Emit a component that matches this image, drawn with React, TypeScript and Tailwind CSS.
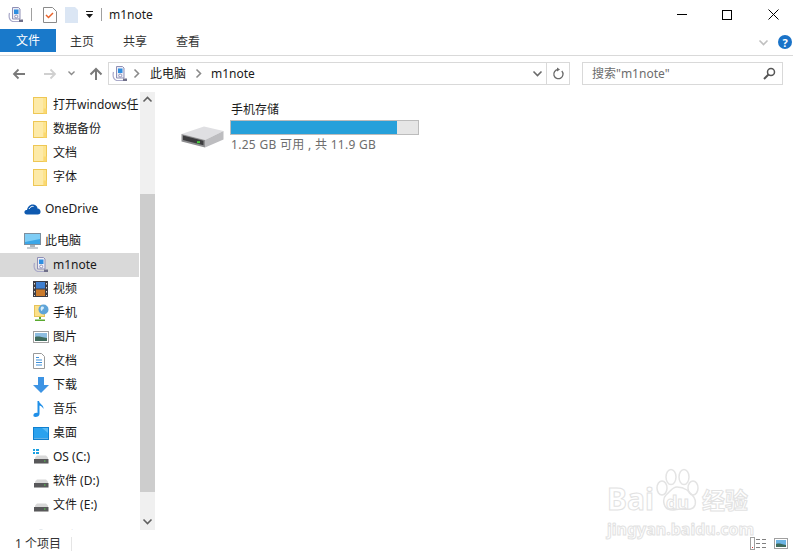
import { ReactNode } from 'react';

const FONT = "font-['Noto_Sans','Noto_Sans_CJK_SC',sans-serif]";

function PhoneIcon({ size = 16 }: { size?: number }) {
  return (
    <svg width={size} height={size} viewBox="0 0 16 16" className="shrink-0">
      <path d="M1.500 6c-1 4 0 7 3 8.500h7" fill="none" stroke="#a9a9c9" strokeWidth="1.200" />
      <path d="M4.500.5h6l1.500 1.500v10H4.500z" fill="#ecedf6" stroke="#8f8fb5" />
      <rect x="6" y="2.500" width="4.500" height="4.500" fill="#2f8ee0" />
      <circle cx="8.200" cy="9.500" r="1.500" fill="#fff" stroke="#8f8fb5" />
      <path d="M11 12.500h4v2.500h-4z" fill="#6f6f88" />
    </svg>
  );
}

function FolderIcon() {
  return (
    <svg width="14" height="17" viewBox="0 0 14 17" className="shrink-0">
      <rect x="0.500" y="0.500" width="13" height="16" fill="#fde48e" stroke="#eec755" />
      <path d="M1 1h9v15H1z" fill="#fdeaa8" />
      <path d="M10.500 11.500h3v5h-3z" fill="#fbd870" />
    </svg>
  );
}

function CloudIcon() {
  return (
    <svg width="17" height="12" viewBox="0 0 17 12" className="shrink-0">
      <path d="M3 11.500C1 11.500 0 10 .5 8.500 1 7.400 2 7 3 7c.5-3 3-6 6.500-5.500C12 2 13.500 3.500 13.500 5.500c2 0 3.500 2 3 4-.3 1.300-1.300 2-2.500 2z" fill="#0f5ab0" />
      <path d="M5 6c1-2 3-3 4.500-2.500" stroke="#fff" fill="none" />
    </svg>
  );
}

function MonitorIcon() {
  return (
    <svg width="17" height="16" viewBox="0 0 17 16" className="shrink-0">
      <rect x="0.500" y="0.500" width="16" height="11" fill="#3aa6e8" stroke="#7d8f9e" />
      <path d="M1 1h15v5L1 9z" fill="#7fcdf5" />
      <path d="M6 12h5v2H6z" fill="#aab5bd" />
      <path d="M3 14.500h11v1H3z" fill="#8d99a3" />
    </svg>
  );
}

function VideoIcon() {
  return (
    <svg width="15" height="16" viewBox="0 0 15 16" className="shrink-0">
      <rect width="15" height="16" fill="#3c3c44" />
      <rect x="3" y="1" width="9" height="6.500" fill="#3f7fd0" />
      <rect x="3" y="8.500" width="9" height="6.500" fill="#c97a2c" />
      <path d="M1 2h1v1.500H1zM1 6h1v1.500H1zM1 10h1v1.500H1zM1 14h1v1H1zM13 2h1v1.500h-1zM13 6h1v1.500h-1zM13 10h1v1.500h-1zM13 14h1v1h-1z" fill="#ddd" />
    </svg>
  );
}

function GlobeIcon() {
  return (
    <svg width="16" height="18" viewBox="0 0 16 18" className="shrink-0">
      <rect x="1.500" y="1.500" width="10" height="11" fill="#fbe08a" stroke="#e6c35a" />
      <circle cx="10.500" cy="5.500" r="5" fill="#5fa4d8" />
      <path d="M8 3c2-1 3 0 3 1s-2 1-2 3c-1 0-2-2-1-4z" fill="#d6eefc" />
      <path d="M6 13h2v2H6zM2 15.500h10V17H2z" fill="#5aa92f" />
    </svg>
  );
}

function PictureIcon() {
  return (
    <svg width="16" height="12" viewBox="0 0 16 12" className="shrink-0">
      <rect x="0.500" y="0.500" width="15" height="11" fill="#fff" stroke="#a0a0a0" />
      <rect x="2" y="2" width="12" height="8" fill="#8dbde0" />
      <path d="M2 6c3-1 6 0 12 1v3H2z" fill="#3f6b5c" />
    </svg>
  );
}

function DocIcon() {
  return (
    <svg width="12" height="16" viewBox="0 0 12 16" className="shrink-0">
      <path d="M.5.500h8l3 3v12H.500z" fill="#fff" stroke="#9a9a9a" />
      <path d="M3 4h3v1H3zM3 6.500h6v1H3zM3 9h6v1H3zM3 11.500h6v1H3z" fill="#3f8fd8" />
    </svg>
  );
}

function DownIcon() {
  return (
    <svg width="16" height="16" viewBox="0 0 16 16" className="shrink-0">
      <path d="M5 0h6v8h5l-8 8-8-8h5z" fill="#3d94e4" />
    </svg>
  );
}

function MusicIcon() {
  return (
    <svg width="12" height="16" viewBox="0 0 12 16" className="shrink-0">
      <path d="M4.500 0h1.500c.3 3 5 4 4.500 8-.5-1.500-2-3-4-3.500V13c0 2-2 3-4 3-1.500 0-2.500-1-2-2.300.5-1.500 2.500-2.200 4-1.700z" fill="#1f8fe8" />
    </svg>
  );
}

function DesktopIcon() {
  return (
    <svg width="16" height="13" viewBox="0 0 16 13" className="shrink-0">
      <rect width="16" height="13" fill="#0f7fd0" />
      <rect x="1" y="1" width="14" height="10" fill="#2ba2ee" />
      <path d="M9 1h6v5z" fill="#5cbcf5" />
      <path d="M1 11.500h14v.5H1z" fill="#bfe6fa" />
    </svg>
  );
}

function NetworkIcon() {
  return (
    <svg width="16" height="16" viewBox="0 0 16 16" className="shrink-0">
      <circle cx="8" cy="7" r="6" fill="#8fc3e8" stroke="#b9c9d6" />
      <path d="M5 4c2-2 4-1 4 0s-2 2-3 2z" fill="#e3f2fb" />
    </svg>
  );
}

function DriveIcon({ win = false }: { win?: boolean }) {
  return (
    <svg width="16" height="16" viewBox="0 0 16 16" className="shrink-0">
      {win && <path d="M0 0h2v2H0zM3 0h3v2H3zM0 3h2v2H0zM3 3h3v2H3z" fill="#1ba1e2" />}
      <path d="M2 8.500 4 6.500h9l2 2V10H2z" fill="#d8d8d8" />
      <rect x="1" y="10" width="14.500" height="4" fill="#58585a" />
      <rect x="1" y="14" width="14.500" height="1" fill="#a8a8a8" />
      <rect x="11" y="11.500" width="1.500" height="1" fill="#56d24a" />
    </svg>
  );
}

function BigDrive() {
  return (
    <svg width="43" height="22" viewBox="0 0 43 22" className="shrink-0">
      <path d="M.5 8 23 .5 42.500 5 24 14z" fill="#dfdfe2" />
      <path d="M24 14 42.500 5v8.500L24 21.500z" fill="#bdbdc0" />
      <path d="M.5 8 24 14v7.500L.5 15.500z" fill="#8e8e90" />
      <path d="M2 9.500 22.500 14.700v4.500L2 14z" fill="#3c3c3e" />
      <rect x="16" y="15.200" width="3" height="2" fill="#47d13f" />
    </svg>
  );
}

function Chevron({ dir, color = '#7a7a7a' }: { dir: 'up' | 'down' | 'right'; color?: string }) {
  const d = dir === 'up' ? 'M1.500 6.500 5.500 2.500l4 4' : dir === 'down' ? 'M1.500 3.500l4 4 4-4' : 'M3.500 1.500l4 4-4 4';
  return (
    <svg width="11" height="11" viewBox="0 0 11 11" className="shrink-0">
      <path d={d} fill="none" stroke={color} strokeWidth="1.600" />
    </svg>
  );
}

function NavRow({ icon, label, active, top }: { icon: ReactNode; label: string; active?: boolean; top?: boolean }) {
  return (
    <div className={`flex h-6 items-center whitespace-nowrap ${active ? 'bg-[#d9d9d9]' : ''} ${top ? 'pl-6' : 'pl-[33px]'}`}>
      <span className={`flex items-center justify-start ${top ? 'w-[21px]' : 'w-5'}`}>{icon}</span>
      <span className="text-[12px] text-[#1a1a1a]">{label}</span>
    </div>
  );
}

function Watermark() {
  const stroke = 'text-white [-webkit-text-stroke:1px_#e2e2e2]';
  return (
    <div className={`pointer-events-none absolute left-[607px] top-[466px] w-[170px] ${FONT}`}>
      <svg width="44" height="46" viewBox="0 0 44 46" className="absolute left-[48px] top-[2px]" fill="none" stroke="#e4e4e4" strokeWidth="1.500">
        <ellipse cx="7" cy="20" rx="5" ry="7" />
        <ellipse cx="16" cy="9" rx="5" ry="7.500" />
        <ellipse cx="29" cy="9" rx="5" ry="7.500" />
        <ellipse cx="38" cy="20" rx="5" ry="7" />
        <path d="M22 19c-5 0-7 5-11 8-4 4-3 15 6 15 3 0 6-1 9-1 5 0 12 2 14-4 2-7-4-11-8-15-3-2-5-3-10-3z" />
      </svg>
      <div className="flex items-end pt-[18px] leading-none">
        <span className={`text-[30px] font-bold leading-[30px] ${stroke}`}>Bai</span>
        <span className={`ml-[12px] text-[18px] font-bold leading-[24px] ${stroke}`}>du</span>
        <span className={`ml-[13px] text-[23px] font-bold leading-[28px] ${stroke}`}>经验</span>
      </div>
      <div className={`mt-[6px] text-[16px] font-bold leading-[18px] whitespace-nowrap ${stroke}`}>jingyan.baidu.com</div>
    </div>
  );
}

export default function App() {
  return (
    <div className={`relative flex h-[554px] w-[793px] flex-col overflow-hidden bg-white ${FONT}`}>
      {/* title bar */}
      <div className="flex h-[29px] shrink-0 items-center pl-[8px]">
        <PhoneIcon />
        <span className="ml-[7px] h-[13px] w-px bg-[#a0a0a0]" />
        <svg width="14" height="16" viewBox="0 0 14 16" className="ml-[11px] shrink-0">
          <path d="M.5.500h9l4 4v11H.500z" fill="#fff" stroke="#8a8a8a" />
          <path d="M3 8l2.500 2.500L10 6" fill="none" stroke="#e8622a" strokeWidth="1.500" />
        </svg>
        <svg width="13" height="16" viewBox="0 0 13 16" className="ml-[8px] shrink-0">
          <path d="M0 0h10l3 3v13H0z" fill="#dbe6f4" />
        </svg>
        <svg width="9" height="8" viewBox="0 0 9 8" className="ml-[7px] shrink-0">
          <path d="M1 0h7v1H1zM1 3h7L4.500 7z" fill="#1a1a1a" />
        </svg>
        <span className="ml-[7px] h-[13px] w-px bg-[#a0a0a0]" />
        <span className="ml-[7px] text-[12px] text-[#1a1a1a]">m1note</span>
        <div className="ml-auto flex h-full">
          <div className="flex w-[38px] items-center justify-center">
            <span className="h-px w-[10px] bg-black" />
          </div>
          <div className="flex w-[52px] items-center justify-center">
            <span className="h-[10px] w-[10px] border border-black" />
          </div>
          <div className="flex w-[40px] items-center justify-center">
            <svg width="11" height="11" viewBox="0 0 11 11">
              <path d="M.5.500l10 10M10.500.500l-10 10" stroke="#000" />
            </svg>
          </div>
        </div>
      </div>

      {/* ribbon tabs */}
      <div className="flex h-[23px] shrink-0 items-center">
        <div className="flex h-full w-[56px] items-center justify-center bg-[#1979ca] pt-[1px] text-[12px] text-white">文件</div>
        <span className="ml-[14px] pt-[3px] text-[12px] text-[#333]">主页</span>
        <span className="ml-[29px] pt-[3px] text-[12px] text-[#333]">共享</span>
        <span className="ml-[29px] pt-[3px] text-[12px] text-[#333]">查看</span>
        <div className="ml-auto flex items-center pr-[1px] pt-[3px]">
          <Chevron dir="down" color="#c0c0c0" />
          <span className="ml-[9px] flex h-[14px] w-[14px] items-center justify-center rounded-full bg-[#1a73c8] text-[11px] leading-none font-bold text-white">?</span>
        </div>
      </div>
      <div className="mt-[3px] h-[1px] shrink-0 bg-[#d9d9d9]" />

      {/* address row */}
      <div className="flex h-[35px] shrink-0 items-center">
        <div className="flex w-[108px] shrink-0 items-center pl-[12px]">
          <svg width="14" height="12" viewBox="0 0 14 12" className="shrink-0">
            <path d="M13 6H2M6.500 1.500 2 6l4.500 4.500" fill="none" stroke="#7a7a7a" strokeWidth="1.800" />
          </svg>
          <svg width="14" height="12" viewBox="0 0 14 12" className="ml-[17px] shrink-0">
            <path d="M1 6h11M7.500 1.500 12 6l-4.500 4.500" fill="none" stroke="#d0d0d0" strokeWidth="1.800" />
          </svg>
          <svg width="9" height="7" viewBox="0 0 9 7" className="ml-[10px] shrink-0">
            <path d="M1.500 1.500 4.500 4.500l3-3" fill="none" stroke="#8a8a8a" strokeWidth="1.400" />
          </svg>
          <svg width="14" height="14" viewBox="0 0 14 14" className="ml-[13px] shrink-0">
            <path d="M7 13V2M1.500 7.500 7 2l5.500 5.500" fill="none" stroke="#7a7a7a" strokeWidth="2" />
          </svg>
        </div>
        <div className="flex h-[23px] w-[462px] shrink-0 items-center border border-[#d9d9d9] pl-[3px]">
          <PhoneIcon />
          <span className="ml-[3px]"><Chevron dir="right" color="#8a8a8a" /></span>
          <span className="ml-[8px] text-[12px] text-[#1a1a1a]">此电脑</span>
          <span className="ml-[7px]"><Chevron dir="right" color="#8a8a8a" /></span>
          <span className="ml-[7px] text-[12px] text-[#1a1a1a]">m1note</span>
          <div className="ml-auto flex h-full items-center">
            <Chevron dir="down" color="#6a6a6a" />
            <span className="ml-[3px] h-full w-px bg-[#d9d9d9]" />
            <svg width="12" height="13" viewBox="0 0 12 13" className="mx-[5px] shrink-0">
              <path d="M9.800 4A4.600 4.600 0 1 1 6 2.500" fill="none" stroke="#6a6a6a" strokeWidth="1.300" />
              <path d="M5 .5 8 2.500 5 4.500z" fill="#6a6a6a" />
            </svg>
          </div>
        </div>
        <div className="ml-[12px] flex h-[23px] w-[201px] shrink-0 items-center justify-between border border-[#d9d9d9] pl-[9px] pr-[6px]">
          <span className="text-[12px] text-[#6d6d6d]">搜索"m1note"</span>
          <svg width="13" height="13" viewBox="0 0 13 13" className="shrink-0">
            <circle cx="8" cy="5" r="3.500" fill="none" stroke="#555" strokeWidth="1.500" />
            <path d="M5.500 7.500 1 12" stroke="#555" strokeWidth="2" />
          </svg>
        </div>
      </div>

      {/* main */}
      <div className="flex min-h-0 flex-1">
        <div className="flex w-[156px] shrink-0">
          <div className="mr-[1px] w-[139px] shrink-0 overflow-hidden pt-[2px]">
            <NavRow icon={<FolderIcon />} label="打开windows任" />
            <NavRow icon={<FolderIcon />} label="数据备份" />
            <NavRow icon={<FolderIcon />} label="文档" />
            <NavRow icon={<FolderIcon />} label="字体" />
            <div className="h-2" />
            <NavRow top icon={<CloudIcon />} label="OneDrive" />
            <div className="h-2" />
            <NavRow top icon={<MonitorIcon />} label="此电脑" />
            <NavRow active icon={<PhoneIcon />} label="m1note" />
            <NavRow icon={<VideoIcon />} label="视频" />
            <NavRow icon={<GlobeIcon />} label="手机" />
            <NavRow icon={<PictureIcon />} label="图片" />
            <NavRow icon={<DocIcon />} label="文档" />
            <NavRow icon={<DownIcon />} label="下载" />
            <NavRow icon={<MusicIcon />} label="音乐" />
            <NavRow icon={<DesktopIcon />} label="桌面" />
            <NavRow icon={<DriveIcon win />} label="OS (C:)" />
            <NavRow icon={<DriveIcon />} label="软件 (D:)" />
            <NavRow icon={<DriveIcon />} label="文件 (E:)" />
            <div className="h-2" />
            <NavRow icon={<NetworkIcon />} label="网络" />
          </div>
          <div className="mt-[1px] flex w-[15px] shrink-0 flex-col bg-[#f0f0f0]">
            <div className="flex h-[17px] shrink-0 items-center justify-center"><Chevron dir="up" color="#606060" /></div>
            <div className="h-[85px] shrink-0" />
            <div className="h-[298px] shrink-0 bg-[#cdcdcd]" />
            <div className="flex-1" />
            <div className="flex h-[17px] shrink-0 items-center justify-center"><Chevron dir="down" color="#606060" /></div>
          </div>
        </div>
        <div className="flex-1 pl-[25px] pt-[9px]">
          <div className="flex items-start">
            <div className="mt-[26px]"><BigDrive /></div>
            <div className="ml-[6px] w-[189px]">
              <div className="h-[20px] pl-[1px] text-[12px] leading-[20px] text-[#1a1a1a]">手机存储</div>
              <div className="h-[15px] border border-[#bcbcbc] bg-[#e6e6e6]">
                <div className="h-full bg-[#26a0da]" style={{ width: '89%' }} />
              </div>
              <div className="mt-[1px] h-[18px] whitespace-nowrap pl-[1px] text-[12px] leading-[18px] tracking-[0.3px] text-[#6d6d6d]">1.25 GB 可用 , 共 11.9 GB</div>
            </div>
          </div>
        </div>
      </div>

      {/* status bar */}
      <div className="flex h-[24px] shrink-0 items-center bg-white pl-[15px] pt-[3px]">
        <span className="text-[12px] text-[#333]">1 个项目</span>
        <span className="ml-[10px] h-[14px] w-px bg-[#e5e5e5]" />
        <div className="ml-auto flex items-center pr-[5px]">
          <svg width="17" height="13" viewBox="0 0 17 13" className="shrink-0">
            <rect x="0.500" y="0.500" width="4" height="12" fill="#fff" stroke="#a0a0a0" />
            <path d="M6 2h4v1H6zM12 2h4v1h-4zM6 6h4v1H6zM12 6h4v1h-4zM6 10h4v1H6zM12 10h4v1h-4z" fill="#808080" />
            <rect x="2" y="10" width="1" height="1" fill="#d03030" />
          </svg>
          <svg width="14" height="11" viewBox="0 0 14 11" className="ml-[7px] shrink-0">
            <rect x="0.500" y="0.500" width="13" height="10" fill="#fff" stroke="#a0a0a0" />
            <rect x="2" y="2" width="10" height="7" fill="#6cb4e4" />
            <path d="M2 6c3-1 5 0 10 1v2H2z" fill="#3f6b5c" />
          </svg>
        </div>
      </div>

      <Watermark />
    </div>
  );
}
